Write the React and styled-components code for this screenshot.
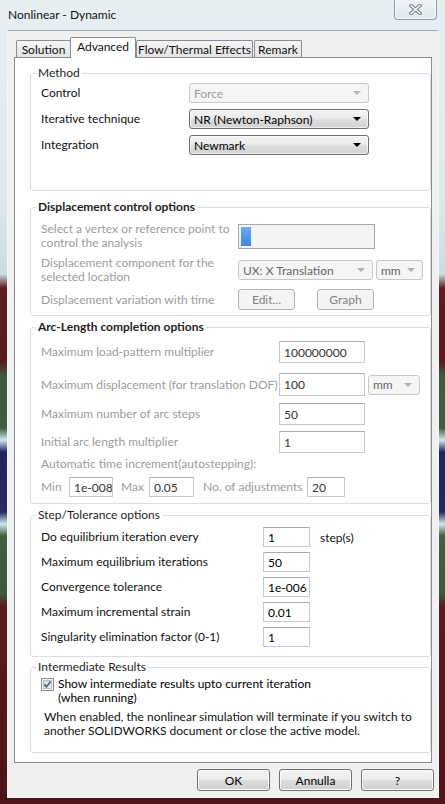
import React from 'react'
import styled, { createGlobalStyle } from 'styled-components'

// pagina base: nessun margine, font simile a Segoe UI
const GlobalStyle = createGlobalStyle`
  html, body { margin: 0; padding: 0; }
  body {
    font-family: Lato, "Noto Sans", "Liberation Sans", sans-serif;
    font-size: 12px;
    color: #000;
  }
`;

// cornice della finestra (vetro Aero con il desktop dietro)
const Window = styled.div`
  width: 445px;
  height: 804px;
  box-sizing: border-box;
  padding: 0 6px 6px 7px;
  display: flex;
  flex-direction: column;
  background: linear-gradient(180deg,
    #e8eff3 0px, #dde8ee 200px, #c9dde3 274px,
    #5d1a21 288px, #571b22 362px,
    #3e5a3d 376px, #405d41 428px,
    #cfe8ee 440px, #20245a 452px, #262a5e 512px,
    #cfe6ec 524px, #3f5f3d 536px, #3c5a3a 594px,
    #5a1b20 606px, #4c1418 100%);
`;

const TitleBar = styled.div`
  height: 30px;
  flex-shrink: 0;
  display: flex;
  align-items: flex-start;
`;

const Title = styled.div`
  margin: 8px 0 0 1px;
  line-height: 14px;
  color: #111;
`;

const CloseButton = styled.div`
  margin: -1px 2px 0 auto;
  width: 43px;
  height: 21px;
  box-sizing: border-box;
  border: 1px solid #8d9ba6;
  border-top: none;
  border-radius: 0 0 4px 4px;
  background: linear-gradient(#f1f5f8, #dfe8ee);
  box-shadow: inset 0 0 0 1px rgba(255, 255, 255, 0.7);
  display: flex;
  align-items: center;
  justify-content: center;
`;

const Client = styled.div`
  flex: 1;
  display: flex;
  flex-direction: column;
  background: #f0f0f0;
  border: 1px solid #f4f7f8;
  border-top-color: #a3afb8;
  padding-top: 6px;
`;

// ============================ schede ============================
const TabStrip = styled.div`
  display: flex;
  align-items: flex-end;
  height: 20px;
  padding-left: 8px;
  position: relative;
  z-index: 1;
`;

const Tab = styled.div`
  box-sizing: border-box;
  width: ${p => p.$w}px;
  height: ${p => (p.$active ? 21 : 17)}px;
  margin-bottom: ${p => (p.$active ? -1 : 0)}px;
  margin-left: ${p => p.$ml || 0}px;
  border: 1px solid #898c95;
  border-bottom: none;
  border-radius: 2px 2px 0 0;
  background: ${p => (p.$active ? '#fff' : 'linear-gradient(#f5f5f5, #e3e3e3)')};
  display: flex;
  align-items: center;
  justify-content: center;
  padding-bottom: ${p => (p.$active ? 3 : 0)}px;
  color: #111;
  white-space: nowrap;
`;

const Panel = styled.div`
  margin: 0 6px;
  height: 706px;
  box-sizing: border-box;
  border: 1px solid #898c95;
  background: #fff;
  display: flex;
  flex-direction: column;
  padding-left: 15px;
`;

// ============================ gruppi ============================
const Group = styled.div`
  position: relative;
  box-sizing: border-box;
  height: ${p => p.$h}px;
  margin-top: ${p => p.$mt}px;
  border: 1px solid #d5dfe5;
  border-radius: 3px;
  padding-left: 10px;
  display: flex;
  flex-direction: column;
`;

const Legend = styled.span`
  position: absolute;
  top: -8px;
  left: 5px;
  padding: 0 2px;
  background: #fff;
  line-height: 14px;
  font-weight: ${p => (p.$bold ? 700 : 400)};
  color: #1e1e1e;
`;

const Row = styled.div`
  display: grid;
  grid-template-columns: ${p => p.$label}px auto;
  align-items: center;
  height: ${p => p.$h}px;
  margin-top: ${p => p.$mt}px;
`;

const Label = styled.span`
  color: ${p => (p.$muted ? '#9c9c9c' : '#111')};
  line-height: 14px;
  white-space: nowrap;
`;

const Controls = styled.div`
  display: flex;
  align-items: center;
  gap: ${p => p.$gap || 4}px;
`;

const Field = styled.input`
  box-sizing: border-box;
  width: ${p => p.$w}px;
  height: ${p => p.$h || 20}px;
  margin: 0;
  padding: 0 0 0 4px;
  border: 1px solid #c6c9ce;
  border-top-color: #a9acb2;
  border-radius: 0;
  background: #fff;
  font: inherit;
  color: ${p => (p.$dim ? '#333' : '#000')};
  outline: none;
`;

const Combo = styled.div`
  box-sizing: border-box;
  width: ${p => p.$w}px;
  height: ${p => p.$h || 20}px;
  display: flex;
  align-items: center;
  justify-content: space-between;
  padding: 0 7px 0 4px;
  border: 1px solid ${p => (p.$disabled ? '#c4c8cb' : '#707070')};
  border-radius: 3px;
  background: ${p => (p.$disabled
    ? '#f5f5f5'
    : 'linear-gradient(#f3f3f3 0%, #ebebeb 45%, #dddddd 55%, #d2d2d2 100%)')};
  box-shadow: ${p => (p.$disabled ? 'none' : 'inset 0 0 0 1px rgba(255,255,255,0.6)')};
  color: ${p => p.$color || '#000'};
`;

const Arrow = styled.span`
  width: 0;
  height: 0;
  border-left: 4px solid transparent;
  border-right: 4px solid transparent;
  border-top: 4px solid ${p => p.$color || '#000'};
`;

const PickBox = styled.div`
  box-sizing: border-box;
  width: 137px;
  height: 25px;
  border: 1px solid #a7a9ad;
  background: #f4f4f4;
  padding: 2px 0 0 2px;
`;

const PickMark = styled.div`
  width: 10px;
  height: 19px;
  background: linear-gradient(#6aaaf0, #3d86de);
`;

const Button = styled.div`
  box-sizing: border-box;
  width: ${p => p.$w}px;
  height: ${p => p.$h || 22}px;
  display: flex;
  align-items: center;
  justify-content: center;
  border: 1px solid ${p => (p.$disabled ? '#adb2b5' : '#707070')};
  border-radius: 3px;
  background: ${p => (p.$disabled
    ? '#f4f4f4'
    : 'linear-gradient(#f2f2f2 0%, #ebebeb 49%, #dddddd 51%, #cfcfcf 100%)')};
  box-shadow: ${p => (p.$disabled ? 'none' : 'inset 0 0 0 1px #fcfcfc')};
  color: ${p => (p.$disabled ? '#838383' : '#000')};
`;

const AutoRow = styled.div`
  display: grid;
  grid-template-columns: 28px 44px 8px 28px 45px 9px 104px 38px;
  align-items: center;
  height: 20px;
  margin-top: 6px;
`;

const Unit = styled.span`
  margin-left: 3px;
  color: #111;
`;

const CheckRow = styled.div`
  display: flex;
  align-items: flex-start;
  gap: 4px;
  margin-top: 9px;
  line-height: 14px;
`;

const Note = styled.p`
  margin: 5px 0 0 3px;
  line-height: 14px;
  color: #111;
`;

const ButtonBar = styled.div`
  display: flex;
  justify-content: flex-end;
  gap: 9px;
  margin-top: 6px;
  padding-right: 4px;
`;

// icona X della barra del titolo
const CloseIcon = () => (
  <svg width="13" height="11" viewBox="0 0 13 11">
    <path d="M2 1.5 L11 9.5 M11 1.5 L2 9.5" stroke="#6e7a86" strokeWidth="3.6" strokeLinecap="square" fill="none" />
    <path d="M2 1.5 L11 9.5 M11 1.5 L2 9.5" stroke="#f4f6f8" strokeWidth="1.6" strokeLinecap="square" fill="none" />
  </svg>
);

const CheckIcon = () => (
  <svg width="13" height="13" viewBox="0 0 13 13" style={{ flexShrink: 0, marginTop: 1 }}>
    <defs>
      <linearGradient id="cb" x1="0" y1="0" x2="1" y2="1">
        <stop offset="0" stopColor="#cdd2d9" />
        <stop offset="1" stopColor="#f7f7f7" />
      </linearGradient>
    </defs>
    <rect x="0.5" y="0.5" width="12" height="12" fill="#f4f4f4" stroke="#8f8f8f" />
    <rect x="2.5" y="2.5" width="8" height="8" fill="url(#cb)" stroke="#b9bec6" />
    <path d="M3.4 6.4 L5.4 8.9 L9.6 3.4" stroke="#4d6185" strokeWidth="1.7" fill="none" />
  </svg>
);

const App = () => {
  return (
    <Window>
      <GlobalStyle />
      <TitleBar>
        <Title>Nonlinear - Dynamic</Title>
        <CloseButton><CloseIcon /></CloseButton>
      </TitleBar>

      <Client>
        <TabStrip>
          <Tab $w={55}>Solution</Tab>
          <Tab $w={66} $ml={-1} $active>Advanced</Tab>
          <Tab $w={117}>Flow/Thermal Effects</Tab>
          <Tab $w={48} $ml={1}>Remark</Tab>
        </TabStrip>

        <Panel>
          {/* Method */}
          <Group $mt={15} $h={118}>
            <Legend>Method</Legend>
            <Row $label={148} $h={20} $mt={9}>
              <Label>Control</Label>
              <Combo $w={180} $disabled $color="#9c9c9c">Force<Arrow $color="#b5b5b5" /></Combo>
            </Row>
            <Row $label={148} $h={20} $mt={6}>
              <Label>Iterative technique</Label>
              <Combo $w={180}>NR (Newton-Raphson)<Arrow /></Combo>
            </Row>
            <Row $label={148} $h={20} $mt={6}>
              <Label>Integration</Label>
              <Combo $w={180}>Newmark<Arrow /></Combo>
            </Row>
          </Group>

          {/* Displacement control options */}
          <Group $mt={16} $h={109}>
            <Legend $bold>Displacement control options</Legend>
            <Row $label={197} $h={25} $mt={14}>
              <Label $muted>Select a vertex or reference point to<br />control the analysis</Label>
              <PickBox><PickMark /></PickBox>
            </Row>
            <Row $label={197} $h={26} $mt={9}>
              <Label $muted>Displacement component for the<br />selected location</Label>
              <Controls $gap={3}>
                <Combo $w={135} $disabled $color="#666">UX: X Translation<Arrow $color="#b0b0b0" /></Combo>
                <Combo $w={47} $disabled $color="#666">mm<Arrow $color="#b0b0b0" /></Combo>
              </Controls>
            </Row>
            <Row $label={197} $h={20} $mt={7}>
              <Label $muted>Displacement variation with time</Label>
              <Controls $gap={22}>
                <Button $w={57} $h={21} $disabled>Edit...</Button>
                <Button $w={57} $h={21} $disabled>Graph</Button>
              </Controls>
            </Row>
          </Group>

          {/* Arc-Length completion options */}
          <Group $mt={11} $h={177}>
            <Legend $bold>Arc-Length completion options</Legend>
            <Row $label={238} $h={22} $mt={13}>
              <Label $muted>Maximum load-pattern multiplier</Label>
              <Field $w={86} $h={22} $dim readOnly defaultValue="100000000" />
            </Row>
            <Row $label={238} $h={22} $mt={10}>
              <Label $muted>Maximum displacement (for translation DOF)</Label>
              <Controls $gap={3}>
                <Field $w={86} $h={23} $dim readOnly defaultValue="100" />
                <Combo $w={52} $disabled $color="#666">mm<Arrow $color="#b0b0b0" /></Combo>
              </Controls>
            </Row>
            <Row $label={238} $h={22} $mt={8}>
              <Label $muted>Maximum number of arc steps</Label>
              <Field $w={86} $h={22} $dim readOnly defaultValue="50" />
            </Row>
            <Row $label={238} $h={22} $mt={6}>
              <Label $muted>Initial arc length multiplier</Label>
              <Field $w={86} $h={22} $dim readOnly defaultValue="1" />
            </Row>
            <Row $label={238} $h={14} $mt={4}>
              <Label $muted>Automatic time increment(autostepping):</Label>
            </Row>
            <AutoRow>
              <Label $muted>Min</Label>
              <Field $w={44} $h={20} $dim readOnly defaultValue="1e-008" />
              <span />
              <Label $muted>Max</Label>
              <Field $w={45} $h={20} $dim readOnly defaultValue="0.05" />
              <span />
              <Label $muted>No. of adjustments</Label>
              <Field $w={38} $h={20} $dim readOnly defaultValue="20" />
            </AutoRow>
          </Group>

          {/* Step/Tolerance options */}
          <Group $mt={11} $h={142}>
            <Legend>Step/Tolerance options</Legend>
            <Row $label={222} $h={20} $mt={11}>
              <Label>Do equilibrium iteration every</Label>
              <Controls $gap={7}>
                <Field $w={47} readOnly defaultValue="1" />
                <Unit>step(s)</Unit>
              </Controls>
            </Row>
            <Row $label={222} $h={20} $mt={5}>
              <Label>Maximum equilibrium iterations</Label>
              <Field $w={47} readOnly defaultValue="50" />
            </Row>
            <Row $label={222} $h={20} $mt={5}>
              <Label>Convergence tolerance</Label>
              <Field $w={47} readOnly defaultValue="1e-006" />
            </Row>
            <Row $label={222} $h={20} $mt={5}>
              <Label>Maximum incremental strain</Label>
              <Field $w={47} readOnly defaultValue="0.01" />
            </Row>
            <Row $label={222} $h={20} $mt={5}>
              <Label>Singularity elimination factor (0-1)</Label>
              <Field $w={47} readOnly defaultValue="1" />
            </Row>
          </Group>

          {/* Intermediate Results */}
          <Group $mt={10} $h={86}>
            <Legend>Intermediate Results</Legend>
            <CheckRow>
              <CheckIcon />
              <span>Show intermediate results upto current iteration<br />(when running)</span>
            </CheckRow>
            <Note>
              When enabled, the nonlinear simulation will terminate if you switch to<br />
              another SOLIDWORKS document or close the active model.
            </Note>
          </Group>
        </Panel>

        <ButtonBar>
          <Button $w={73}>OK</Button>
          <Button $w={73}>Annulla</Button>
          <Button $w={73}>?</Button>
        </ButtonBar>
      </Client>
    </Window>
  )
}

export default App
